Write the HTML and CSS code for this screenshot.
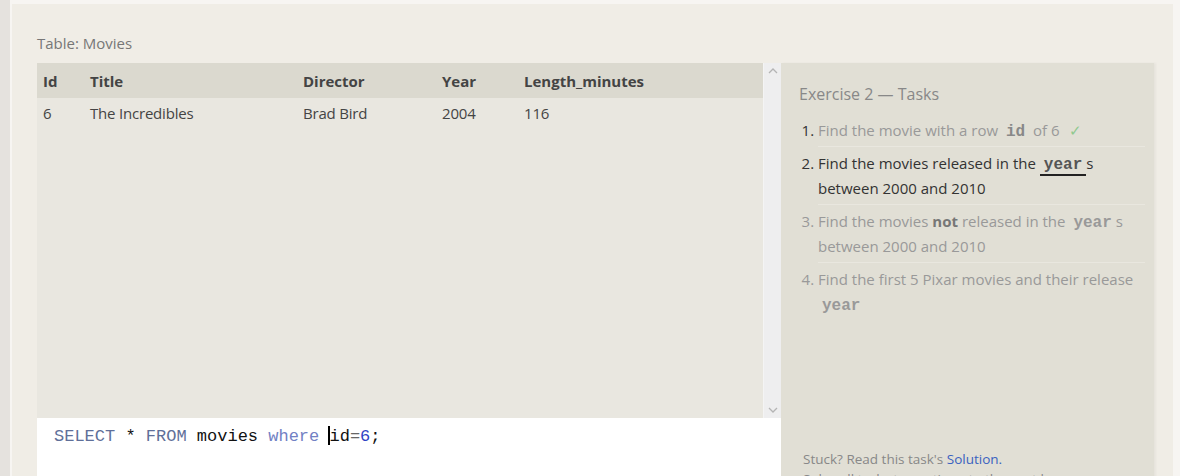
FILE: index.html
```html
<!DOCTYPE html>
<html>
<head>
<meta charset="utf-8">
<link rel="stylesheet" href="styles.css">
</head>
<body>
<div class="shell">
  <div class="main">
    <div class="table-label">Table: Movies</div>
    <div class="workspace">
      <div class="left">
        <div class="table-wrap">
          <div class="table-scroll">
            <table class="data">
              <thead>
                <tr><th class="c-id">Id</th><th class="c-title">Title</th><th class="c-dir">Director</th><th class="c-year">Year</th><th>Length_minutes</th></tr>
              </thead>
              <tbody>
                <tr><td>6</td><td>The Incredibles</td><td>Brad Bird</td><td>2004</td><td>116</td></tr>
              </tbody>
            </table>
          </div>
          <div class="scrollbar">
            <svg class="arrow" width="10" height="7" viewBox="0 0 10 7"><path d="M1 6 L5 2 L9 6" fill="none" stroke="#b4b4b4" stroke-width="1.3"/></svg>
            <svg class="arrow" width="10" height="7" viewBox="0 0 10 7"><path d="M1 1 L5 5 L9 1" fill="none" stroke="#b4b4b4" stroke-width="1.3"/></svg>
          </div>
        </div>
        <div class="editor"><span class="kw">SELECT</span> * <span class="kw">FROM</span> movies <span class="kw2">where</span> <span class="cursor"></span>id<span class="op">=</span><span class="num">6</span>;</div>
      </div>
      <div class="tasks">
        <h2 class="tasks-title">Exercise 2 — Tasks</h2>
        <ol class="task-list">
          <li class="done">Find the movie with a row <code>id</code> of 6 <span class="check">✓</span></li>
          <li class="current">Find the movies released in the <code class="active">year</code>s between 2000 and 2010</li>
          <li class="todo">Find the movies <b>not</b> released in the <code>year</code>s between 2000 and 2010</li>
          <li class="todo">Find the first 5 Pixar movies and their release <code>year</code></li>
        </ol>
        <div class="footer">
          <p>Stuck? Read this task's <a href="#">Solution.</a></p>
          <p>Solve all tasks to continue to the next lesson.</p>
        </div>
      </div>
    </div>
  </div>
</div>
</body>
</html>
```

FILE: styles.css
```css
html, body {
  margin: 0;
  height: 100%;
  overflow: hidden;
}
body {
  background: #e5e2de;
  font-family: "Open Sans", "Liberation Sans", sans-serif;
  color: #444;
}
.shell {
  margin-left: 10px;
  padding-top: 4px;
  background: #f7f5f2;
  height: 100%;
}
.main {
  margin-left: 2px;
  margin-right: 7px;
  background: #f0ede6;
  padding: 29px 19px 0 25px;
  height: 600px;
}
.table-label {
  font-size: 15px;
  line-height: 20px;
  color: #777;
  margin-bottom: 10px;
}
.workspace {
  display: flex;
  align-items: flex-start;
}
.left {
  width: 744px;
  display: flex;
  flex-direction: column;
}
.table-wrap {
  display: flex;
  height: 355px;
}
.table-scroll {
  flex: 1;
  background: #e9e7e0;
}
.data {
  width: 100%;
  border-collapse: collapse;
  font-size: 15px;
}
.data th {
  background: #dbd9cf;
  text-align: left;
  font-weight: 700;
  color: #444;
  height: 35px;
  padding: 0 6px;
}
.data td {
  padding: 5px 6px;
  line-height: 20px;
  color: #444;
  letter-spacing: -0.2px;
}
.c-id { width: 35px; }
.c-title { width: 201px; }
.c-dir { width: 127px; }
.c-year { width: 70px; }
.scrollbar {
  width: 18px;
  background: #eeeeef;
  border-left: 1px solid #f4f4f4;
  display: flex;
  flex-direction: column;
  justify-content: space-between;
  align-items: center;
  padding: 4px 0 4px;
  box-sizing: border-box;
}
.arrow { display: block; }
.editor {
  background: #fff;
  height: 120px;
  padding: 8px 17px;
  font-family: "Liberation Mono", "Courier New", monospace;
  font-size: 17px;
  line-height: 20px;
  color: #111;
  white-space: pre;
}
.kw { color: #5f6f99; }
.kw2 { color: #7281c4; }
.op { color: #666; }
.num { color: #2f43c4; }
.cursor {
  display: inline-block;
  width: 0;
  height: 19px;
  border-left: 2px solid #000;
  margin-left: -1px;
  margin-right: -1px;
  vertical-align: -4px;
}
.tasks {
  width: 373px;
  box-sizing: border-box;
  background: #e1dfd5;
  height: 426px;
  padding: 20px 9px 0 18px;
  display: flex;
  flex-direction: column;
  box-shadow: 2px 0 2px rgba(0,0,0,0.04);
}
.tasks-title {
  margin: 0 0 9px;
  font-size: 16px;
  font-weight: 400;
  line-height: 22px;
  color: #888;
}
.task-list {
  margin: 0;
  padding-left: 19px;
  font-size: 15px;
  line-height: 25px;
}
.task-list li {
  padding: 4px 0 3px;
  border-bottom: 1px solid #e9e7df;
}
.task-list li:last-child { border-bottom: none; }
.task-list li.done { color: #999; }
.task-list li.done::marker { color: #333; }
.task-list li.current { color: #333; }
.task-list li.todo { color: #999; }
.task-list b { color: #777; }
.task-list code {
  font-family: "Liberation Mono", "Courier New", monospace;
  font-weight: 700;
  font-size: 16px;
  line-height: 1;
  padding: 0 4px;
  color: #999;
}
.task-list li.done code { color: #888; }
.task-list code.active {
  color: #555;
  border-bottom: 2px solid #222;
}
.check {
  color: #8fc98f;
  margin-left: 6px;
}
.footer {
  margin-top: auto;
  padding-left: 4px;
  font-size: 13.5px;
  line-height: 20px;
  color: #888;
}
.footer p { margin: 0; }
.footer a {
  color: #3a62c0;
  text-decoration: none;
}
```
